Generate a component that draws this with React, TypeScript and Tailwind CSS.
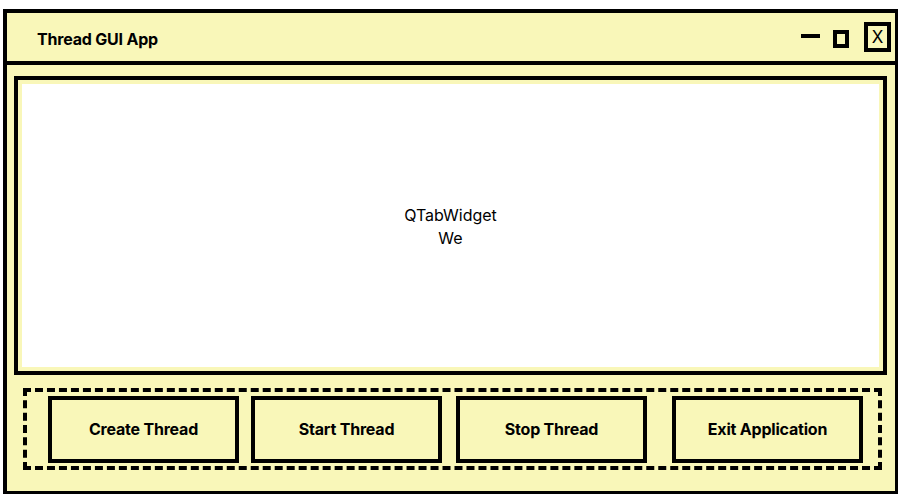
import React from 'react';

const font = { fontFamily: 'Inter, "Open Sans", sans-serif' };

const buttons = [
  { label: 'Create Thread', cls: 'ml-[21px]' },
  { label: 'Start Thread', cls: 'ml-[12px]' },
  { label: 'Stop Thread', cls: 'ml-[14px]' },
  { label: 'Exit Application', cls: 'ml-[25px]' },
];

const App = () => {
  return (
    <div className="w-[900px] h-[494px] bg-white pt-[9px] pl-[3px] overflow-hidden" style={font}>
      <div className="w-[895px] h-[485px] bg-[#f9f7b9] border-l-4 border-t-4 border-r-[3px] border-b-[3px] border-black flex flex-col text-black">
        {/* title bar */}
        <div className="h-[52px] shrink-0 border-b-4 border-black flex items-center pl-[30px]">
          <span className="font-bold text-[16px] tracking-[-0.2px] mt-[4px]">Thread GUI App</span>
          <div className="ml-auto flex items-center">
            <div className="w-[19px] h-[4px] bg-black mt-[-2px]" />
            <div className="w-[16px] h-[18px] border-4 border-black ml-[13px] mt-[3px]" />
            <div className="w-[27px] h-[30px] border-4 border-black ml-[15px] mr-[4px] flex items-center justify-center text-[17px] leading-none">
              X
            </div>
          </div>
        </div>

        {/* tab widget */}
        <div className="mt-[11px] ml-[7px] mr-[8px] h-[299px] border-4 border-black p-[4px]">
          <div className="w-full h-full bg-white flex flex-col items-center justify-center text-[16px] leading-[23px] pt-[2px]">
            <span>QTabWidget</span>
            <span>We</span>
          </div>
        </div>

        {/* button row */}
        <div className="mt-[13px] ml-[16px] mr-[13px] h-[82px] border-4 border-dashed border-black flex items-center">
          {buttons.map((b) => (
            <button
              key={b.label}
              className={`${b.cls} w-[191px] h-[67px] border-4 border-black flex items-center justify-center font-bold text-[16px] tracking-[-0.2px]`}
            >
              {b.label}
            </button>
          ))}
        </div>
      </div>
    </div>
  );
};

export default App;
